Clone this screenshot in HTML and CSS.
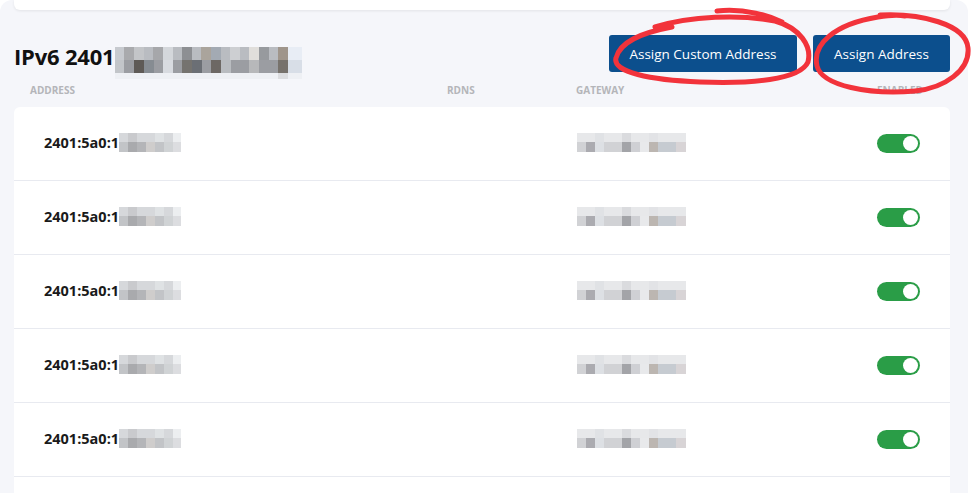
FILE: index.html
```html
<!DOCTYPE html>
<html lang="en">

<head>
  <meta charset="UTF-8">
  <meta name="viewport" content="width=device-width, initial-scale=1.0">
  <title>IPv6 Addresses</title>
  <link rel="stylesheet" href="styles.css">
</head>

<body>
  <div class="panel">
    <!-- card above, mostly scrolled out -->
    <div class="top-card"></div>

    <!-- section header -->
    <div class="section-head">
      <h1 class="section-title">IPv6 2401<svg class="mosaic" width="187" height="32" viewBox="0 0 187 32">
          <rect x="0" y="0" width="187" height="13" fill="#b9bcc1"/>
          <rect x="0" y="13" width="187" height="13" fill="#9b9da2"/>
          <rect x="0" y="0" width="9" height="13" fill="#c7cacf"/>
          <rect x="9" y="0" width="10" height="13" fill="#a9aaad"/>
          <rect x="19" y="0" width="10" height="13" fill="#c3c5c8"/>
          <rect x="38" y="0" width="10" height="13" fill="#a6a7aa"/>
          <rect x="48" y="0" width="10" height="13" fill="#d4d7db"/>
          <rect x="67" y="0" width="10" height="13" fill="#8d8f93"/>
          <rect x="86" y="0" width="10" height="13" fill="#aaa49c"/>
          <rect x="96" y="0" width="10" height="13" fill="#a3aab3"/>
          <rect x="115" y="0" width="10" height="13" fill="#cdcfd2"/>
          <rect x="134" y="0" width="10" height="13" fill="#e0dedb"/>
          <rect x="144" y="0" width="10" height="13" fill="#979a9e"/>
          <rect x="163" y="0" width="10" height="13" fill="#9f958b"/>
          <rect x="173" y="0" width="14" height="13" fill="#e8edf5"/>
          <rect x="0" y="13" width="9" height="13" fill="#c2c5c9"/>
          <rect x="19" y="13" width="10" height="13" fill="#5e5a56"/>
          <rect x="29" y="13" width="10" height="13" fill="#868c92"/>
          <rect x="48" y="13" width="10" height="13" fill="#d8dbe0"/>
          <rect x="67" y="13" width="10" height="13" fill="#75736f"/>
          <rect x="77" y="13" width="10" height="13" fill="#6b6f75"/>
          <rect x="96" y="13" width="10" height="13" fill="#6d6864"/>
          <rect x="106" y="13" width="10" height="13" fill="#b9bcc0"/>
          <rect x="134" y="13" width="10" height="13" fill="#b7b8ba"/>
          <rect x="163" y="13" width="10" height="13" fill="#77726c"/>
          <rect x="173" y="13" width="14" height="13" fill="#d8dee7"/>
          <rect x="0" y="26" width="187" height="6" fill="#eef0f4"/>
          <rect x="163" y="26" width="10" height="6" fill="#dcdde0"/>
        </svg></h1>
      <div class="actions">
        <button class="btn">Assign Custom Address</button>
        <button class="btn btn-short">Assign Address</button>
      </div>
    </div>

    <!-- column headers -->
    <div class="col-head">
      <span>Address</span>
      <span>rDNS</span>
      <span>Gateway</span>
      <span>Enabled</span>
    </div>

    <!-- address rows -->
    <div class="table">
      <div id="rows"></div>
      <div class="row row-empty"></div>
    </div>
  </div>

  <!-- red marker circles drawn over the buttons -->
  <svg class="marks" width="972" height="110" viewBox="0 0 972 110">
    <path d="M717 11 C745 8 770 16 782 22 M655 27 C690 16 740 14 775 21 C800 28 812 46 808 62 C800 80 750 84 700 82 C650 80 612 72 616 58 C620 42 640 33 672 27"
      fill="none" stroke="#f2333b" stroke-width="5" stroke-linecap="round"/>
    <path d="M880 15 C920 13 966 24 968 48 C970 70 945 88 915 91 C870 95 822 86 817 66 C812 44 835 24 878 17 C890 15 900 15 905 16"
      fill="none" stroke="#f2333b" stroke-width="5" stroke-linecap="round"/>
  </svg>

  <script src="script.js"></script>
</body>

</html>
```

FILE: script.js
```js
// 生成地址行
const rows = document.getElementById('rows');
const count = 5;

const addrMosaic = `
  <svg class="mosaic" width="62" height="19" viewBox="0 0 62 19">
    <rect x="0" y="0" width="62" height="9" fill="#d6d8db"/>
    <rect x="0" y="9" width="62" height="10" fill="#c2c4c7"/>
    <rect x="9" y="0" width="9" height="9" fill="#c9cacd"/>
    <rect x="36" y="0" width="9" height="9" fill="#dfe2e4"/>
    <rect x="54" y="0" width="8" height="9" fill="#eceef0"/>
    <rect x="9" y="9" width="9" height="10" fill="#a9aaad"/>
    <rect x="18" y="9" width="9" height="10" fill="#b4b5b8"/>
    <rect x="27" y="9" width="9" height="10" fill="#cfcdcc"/>
    <rect x="45" y="9" width="9" height="10" fill="#d0d3d5"/>
    <rect x="54" y="9" width="8" height="10" fill="#dcdde0"/>
  </svg>`;

const gwMosaic = `
  <svg class="mosaic" width="109" height="19" viewBox="0 0 109 19">
    <rect x="0" y="0" width="109" height="9" fill="#e7e8ea"/>
    <rect x="0" y="9" width="109" height="10" fill="#d1d2d5"/>
    <rect x="18" y="0" width="9" height="9" fill="#e0e2e5"/>
    <rect x="45" y="0" width="9" height="9" fill="#dadbde"/>
    <rect x="72" y="0" width="9" height="9" fill="#e2e3e6"/>
    <rect x="9" y="9" width="9" height="10" fill="#ababb0"/>
    <rect x="18" y="9" width="9" height="10" fill="#dde0e4"/>
    <rect x="45" y="9" width="9" height="10" fill="#a3a4a8"/>
    <rect x="54" y="9" width="9" height="10" fill="#cfd0d4"/>
    <rect x="63" y="9" width="9" height="10" fill="#e8e9eb"/>
    <rect x="72" y="9" width="9" height="10" fill="#bcb6b1"/>
    <rect x="81" y="9" width="18" height="10" fill="#c6cbd1"/>
    <rect x="99" y="9" width="10" height="10" fill="#d8d4d6"/>
  </svg>`;

let html = '';
for (let i = 0; i < count; i++) {
  html += `
    <div class="row">
      <div class="addr">2401:5a0:1${addrMosaic}</div>
      <div class="rdns"></div>
      <div class="gw">${gwMosaic}</div>
      <div><span class="toggle"></span></div>
    </div>`;
}
rows.innerHTML = html;
```

FILE: styles.css
```css
:root {
  --panel-bg: #f5f6fa;
  --btn-color: #0c4f8d;
  --line-color: #e8eaf0;
  --green: #2a9d47;
}

* {
  box-sizing: border-box;
  margin: 0;
  padding: 0;
}

body {
  font-family: "Open Sans", "Liberation Sans", sans-serif;
  background: #fff;
  color: #111;
  width: 972px;
  height: 493px;
  overflow: hidden;
  position: relative;
}

/* 灰色面板 */
.panel {
  width: 968px;
  height: 520px;
  background: var(--panel-bg);
  border-radius: 12px;
  padding: 0 18px 0 14px;
}

.top-card {
  height: 10px;
  background: #fff;
  border-radius: 0 0 6px 6px;
  box-shadow: 0 1px 3px rgba(0, 0, 0, 0.08);
}

/* 标题和按钮 */
.section-head {
  display: flex;
  justify-content: space-between;
  align-items: center;
  margin-top: 25px;
  height: 37px;
}

.section-title {
  display: flex;
  align-items: flex-start;
  font-size: 22px;
  font-weight: 700;
  line-height: 26px;
  letter-spacing: -0.2px;
  padding-top: 4px;
}

.section-title .mosaic {
  margin-top: 4px;
  margin-left: 1px;
  margin-bottom: -10px;
}

.actions {
  display: flex;
  gap: 16px;
}

.btn {
  background: var(--btn-color);
  color: #fff;
  border: none;
  border-radius: 3px;
  height: 37px;
  width: 188px;
  font-family: inherit;
  font-size: 13.5px;
  cursor: pointer;
}

.btn-short {
  width: 137px;
}

/* 表头 */
.col-head {
  display: grid;
  grid-template-columns: 417px 129px 301px auto;
  padding-left: 16px;
  height: 35px;
  align-items: center;
  font-size: 10px;
  font-weight: 700;
  text-transform: uppercase;
  color: #b4b5b9;
}

/* 地址表格 */
.table {
  background: #fff;
  border-radius: 6px 6px 0 0;
}

.row {
  display: grid;
  grid-template-columns: 403px 130px 300px auto;
  padding-left: 30px;
  height: 74px;
  align-items: center;
  border-bottom: 1px solid var(--line-color);
}

.row-empty {
  border-bottom: none;
}

.addr {
  display: flex;
  align-items: center;
  font-size: 14.5px;
  font-weight: 700;
  color: #1a1a1a;
  margin-top: -2px;
}

.gw {
  display: flex;
  margin-top: -2px;
}

.mosaic {
  display: block;
}

.toggle {
  display: block;
  position: relative;
  width: 43px;
  height: 19px;
  border-radius: 10px;
  background: var(--green);
}

.toggle::after {
  content: "";
  position: absolute;
  right: 2px;
  top: 2px;
  width: 15px;
  height: 15px;
  border-radius: 50%;
  background: #fff;
}

/* 红色标记 */
.marks {
  position: absolute;
  left: 0;
  top: 0;
  pointer-events: none;
}
```
